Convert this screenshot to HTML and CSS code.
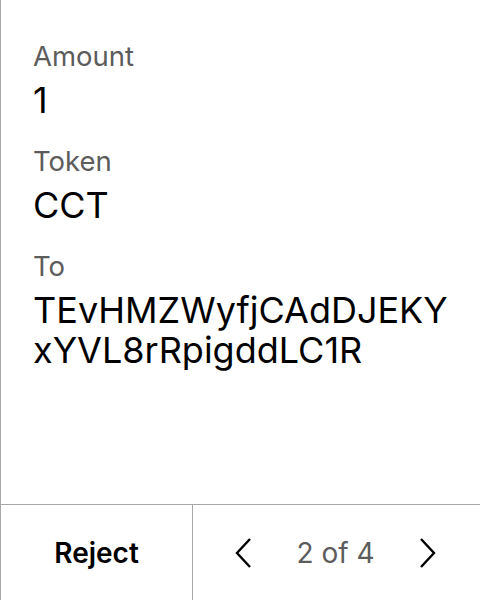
FILE: index.html
```html
<!DOCTYPE html>
<html>
<head>
<meta charset="utf-8">
<link rel="stylesheet" href="styles.css">
</head>
<body>
<div class="screen">
  <div class="content">
    <div class="field">
      <div class="label">Amount</div>
      <div class="value">1</div>
    </div>
    <div class="field">
      <div class="label">Token</div>
      <div class="value">CCT</div>
    </div>
    <div class="field">
      <div class="label">To</div>
      <div class="value address">TEvHMZWyfjCAdDJEKY<br>xYVL8rRpigddLC1R</div>
    </div>
  </div>
  <div class="footer">
    <div class="reject">Reject</div>
    <div class="pager">
      <svg class="chev" width="20" height="32" viewBox="0 0 20 32"><path d="M17 2 L4 16 L17 30" fill="none" stroke="#000" stroke-width="2.4"/></svg>
      <span class="count">2 of 4</span>
      <svg class="chev" width="20" height="32" viewBox="0 0 20 32"><path d="M3 2 L16 16 L3 30" fill="none" stroke="#000" stroke-width="2.4"/></svg>
    </div>
  </div>
</div>
</body>
</html>
```
FILE: styles.css
```css
html, body {
  margin: 0;
  padding: 0;
  background: #fff;
}
.screen {
  width: 480px;
  height: 600px;
  box-sizing: border-box;
  border-left: 1px solid #a8a8a8;
  display: flex;
  flex-direction: column;
  font-family: Inter, "Noto Sans", sans-serif;
}
.content {
  flex: 1;
  padding: 38px 0 0 32px;
  display: flex;
  flex-direction: column;
  gap: 21px;
}
.label {
  font-size: 27.5px;
  line-height: 36px;
  margin-bottom: 4px;
  color: #5c5c5c;
}
.value {
  font-size: 36px;
  line-height: 44px;
  color: #000;
}
.address {
  line-height: 40px;
  margin-top: 6px;
}
.footer {
  height: 95px;
  border-top: 1px solid #a8a8a8;
  display: grid;
  grid-template-columns: 191px 1fr;
}
.reject {
  display: flex;
  align-items: center;
  justify-content: center;
  font-size: 28px;
  font-weight: 600;
  color: #000;
}
.pager {
  border-left: 1px solid #a8a8a8;
  display: flex;
  align-items: center;
  justify-content: space-between;
  padding: 0 42px 0 40px;
}
.count {
  font-size: 28px;
  color: #5c5c5c;
}
```
